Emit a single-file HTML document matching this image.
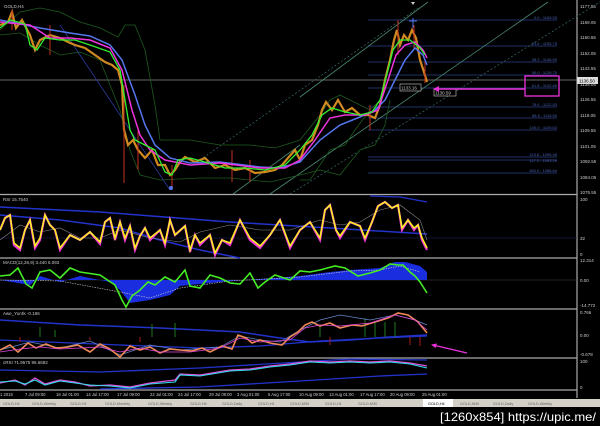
<!DOCTYPE html>
<html><head><meta charset="utf-8"><style>
html,body{margin:0;padding:0;background:#000;width:600px;height:426px;overflow:hidden}
svg{display:block}
text{font-family:"Liberation Sans",sans-serif}
</style></head><body>
<svg width="600" height="426" viewBox="0 0 600 426" xmlns="http://www.w3.org/2000/svg">
<rect width="600" height="426" fill="#000"/>
<line x1="577" y1="0" x2="577" y2="398" stroke="#ccc" stroke-width="1"/>
<g font-size="4.5" fill="#ccc">
<text x="580" y="8">1177.55</text><text x="580" y="24">1169.05</text><text x="580" y="39">1160.55</text>
<text x="580" y="55">1152.05</text><text x="580" y="70">1143.55</text><text x="580" y="86">1135.05</text>
<text x="580" y="101">1126.55</text><text x="580" y="117">1118.05</text><text x="580" y="132">1109.55</text>
<text x="580" y="148">1101.05</text><text x="580" y="163">1092.55</text><text x="580" y="179">1084.05</text>
<text x="580" y="194">1075.55</text>
<text x="580" y="201">100</text><text x="580" y="240">32</text><text x="580" y="256">0</text>
<text x="580" y="262">12.314</text><text x="580" y="282">0.00</text><text x="580" y="307">-14.772</text>
<text x="580" y="314">0.766</text><text x="580" y="337">0.00</text><text x="580" y="356">-0.678</text>
<text x="580" y="363">100</text><text x="580" y="389">0</text>
</g>
<rect x="577" y="77" width="21" height="7" fill="#ddd"/><text x="579" y="82.5" font-size="4.5" fill="#000">1136.50</text>
<text x="4" y="8" font-size="4.5" fill="#ccc">GOLD,H4</text>
<line x1="0" y1="80" x2="577" y2="80" stroke="#888" stroke-width="0.8"/>
<g stroke="#2a3f8a" stroke-width="0.8">
<line x1="368" y1="20" x2="557" y2="20"/><line x1="368" y1="46" x2="557" y2="46"/>
<line x1="368" y1="62" x2="557" y2="62"/><line x1="368" y1="75" x2="557" y2="75"/>
<line x1="368" y1="88" x2="557" y2="88"/><line x1="368" y1="107" x2="557" y2="107"/>
<line x1="368" y1="118" x2="557" y2="118"/><line x1="368" y1="130" x2="557" y2="130"/>
<line x1="368" y1="157" x2="557" y2="157"/><line x1="368" y1="160" x2="557" y2="160"/>
<line x1="368" y1="173" x2="557" y2="173"/>
</g>
<g font-size="4" fill="#4a60b0" text-anchor="end">
<text x="557" y="19">0.0 : 1169.93</text><text x="557" y="45">23.6 : 1155.75</text><text x="557" y="61">38.2 : 1146.99</text>
<text x="557" y="74">50.0 : 1139.75</text><text x="557" y="87">61.8 : 1132.66</text><text x="557" y="106">78.6 : 1122.53</text>
<text x="557" y="117">88.6 : 1116.55</text><text x="557" y="129">100.0 : 1109.63</text><text x="557" y="156">123.6 : 1095.46</text>
<text x="557" y="162">127.2 : 1093.29</text><text x="557" y="172">150.0 : 1086.64</text>
</g>
<g stroke="#4a8a70" stroke-width="0.8" fill="none">
<line x1="300" y1="97" x2="428" y2="2"/><line x1="270" y1="194" x2="548" y2="2"/>
<line x1="233" y1="194" x2="300" y2="145"/>
</g>
<g stroke="#3a6a70" stroke-width="0.7" fill="none" stroke-dasharray="2,2">
<line x1="200" y1="160" x2="418" y2="8"/><line x1="290" y1="194" x2="600" y2="2"/>
</g>
<line x1="60" y1="25" x2="170" y2="190" stroke="#2a3a9a" stroke-width="0.8"/>
<polyline fill="none" stroke="#1e5a1e" stroke-width="0.8" points="0,30 20,12 40,8 60,12 80,22 100,28 118,37 125,25 135,25 145,50 155,105 160,140 190,140 220,145 250,145 275,148 300,140 320,115 330,100 340,95 360,105 370,110"/>
<polyline fill="none" stroke="#1e5a1e" stroke-width="0.8" points="0,35 20,33 40,45 60,55 80,52 100,60 120,110 130,150 140,175 160,180 200,178 230,178 270,182 300,175 320,170 340,175 360,150 375,145 385,125 390,100"/>
<polyline fill="none" stroke="#1e5a1e" stroke-width="0.8" points="300,180 310,180 320,165 330,150 345,145 355,130 370,110 380,100 390,75"/>
<polyline fill="none" stroke="#d08a20" stroke-width="2.2" points="0,25 8,22 12,12 16,28 22,20 30,35 35,50 40,40 50,35 60,38 68,42 75,45 85,48 95,55 105,62 112,65 118,70 122,85 124,130 128,145 133,140 138,150 145,158 152,150 158,165 165,165 170,175 175,170 180,162 185,157 195,162 205,158 215,168 225,165 235,170 245,168 255,173 265,172 275,170 282,165 288,158 295,150 300,160 305,145 312,140 318,125 322,110 326,102 332,110 338,100 345,112 352,108 360,115 368,115 375,118 380,105 385,80 390,60 394,40 397,30 400,45 404,35 408,40 412,30 416,38 420,60 424,72 427,82"/>
<g stroke="#c23020" stroke-width="1">
<line x1="12" y1="10" x2="12" y2="30"/><line x1="50" y1="25" x2="50" y2="55"/><line x1="124" y1="85" x2="124" y2="183"/>
<line x1="138" y1="130" x2="138" y2="170"/><line x1="172" y1="165" x2="172" y2="188"/><line x1="232" y1="150" x2="232" y2="182"/>
<line x1="250" y1="160" x2="250" y2="182"/><line x1="370" y1="105" x2="370" y2="130"/><line x1="398" y1="20" x2="398" y2="55"/>
<line x1="414" y1="25" x2="414" y2="50"/><line x1="425" y1="60" x2="425" y2="83"/>
</g>
<polyline fill="none" stroke="#5577ee" stroke-width="1.5" points="0,20 40,28 70,33 90,36 110,45 122,60 135,95 145,125 155,145 170,158 190,163 220,162 260,167 280,168 300,162 320,140 340,125 360,117 375,110 385,100 395,80 405,60 415,48 423,55 427,65"/>
<polyline fill="none" stroke="#ee33dd" stroke-width="1.5" points="0,22 30,25 50,38 70,38 90,40 110,48 122,70 132,110 140,135 150,150 165,160 190,165 220,163 260,168 285,168 300,160 315,140 330,118 345,115 365,115 378,110 388,80 396,55 405,45 415,42 423,50 427,58"/>
<polyline fill="none" stroke="#33ee33" stroke-width="1.3" points="0,28 10,20 25,24 30,45 37,50 45,38 60,40 75,40 90,45 110,52 120,70 125,100 130,130 135,140 145,145 155,150 165,172 172,175 178,160 190,158 205,162 225,168 245,168 265,170 285,165 300,150 312,135 322,115 332,108 345,112 360,115 372,112 380,100 388,70 393,50 400,40 410,40 420,48 425,55"/>
<line x1="413" y1="18" x2="413" y2="28" stroke="#5577ee" stroke-width="1"/><line x1="409" y1="21" x2="417" y2="21" stroke="#5577ee" stroke-width="1"/>
<circle cx="171" cy="188" r="2" fill="#5577ee"/>
<path d="M411 2 l2 3 2 -3z" fill="#ccc"/>
<rect x="400" y="84" width="21" height="7" fill="#000" stroke="#ccc" stroke-width="0.6"/><text x="401" y="89.5" font-size="4.5" fill="#ccc">1133.16</text>
<rect x="434" y="89" width="22" height="7" fill="#000" stroke="#ccc" stroke-width="0.6"/><text x="435" y="94.5" font-size="4.5" fill="#ccc">1130.59</text>
<line x1="435" y1="89" x2="525" y2="89" stroke="#ee33dd" stroke-width="1.5"/>
<path d="M433 89 l6 -3 0 6z" fill="#ee33dd"/>
<rect x="525" y="76" width="34" height="20" fill="none" stroke="#ee33dd" stroke-width="1.3"/>
<g stroke="#aaa" stroke-width="1.2">
<line x1="0" y1="194.5" x2="577" y2="194.5"/><line x1="0" y1="258" x2="577" y2="258"/>
<line x1="0" y1="309" x2="577" y2="309"/><line x1="0" y1="358" x2="577" y2="358"/>
<line x1="0" y1="390" x2="577" y2="390"/>
</g>
<text x="3" y="201" font-size="4.5" fill="#ccc">RSI 15.7540</text>
<line x1="0" y1="238" x2="577" y2="238" stroke="#222a66" stroke-width="0.6"/>
<polyline fill="none" stroke="#2233cc" stroke-width="1.5" points="0,207 100,212 230,222 330,228 427,234"/>
<polyline fill="none" stroke="#2233cc" stroke-width="1.5" points="0,215 60,220 120,228 160,240 200,250 240,258"/>
<polyline fill="none" stroke="#2233cc" stroke-width="1.3" points="370,196 400,197 427,202"/>
<polyline fill="none" stroke="#888" stroke-width="0.6" points="0,240 20,225 40,232 60,228 80,238 100,238 120,230 150,238 180,242 200,232 230,225 260,230 290,230 320,220 340,225 360,222 380,210 400,205 420,220 427,240"/>
<polyline fill="none" stroke="#ee33dd" stroke-width="2.2" points="0,230 5,218 10,215 14,245 20,250 25,230 30,220 35,248 40,240 45,215 50,225 55,230 60,250 70,235 80,240 90,232 100,244 105,222 110,218 115,240 120,222 125,240 130,226 135,250 140,236 145,228 150,240 160,230 165,245 170,220 175,235 185,226 190,252 195,235 200,245 210,235 215,255 222,240 230,245 240,220 250,240 260,248 270,235 280,220 290,248 300,230 310,222 320,240 325,210 330,205 336,230 340,238 350,222 360,226 365,240 372,222 378,206 385,202 392,208 398,205 402,230 408,220 414,230 418,225 422,240 427,250"/>
<polyline fill="none" stroke="#ffee22" stroke-width="1.6" points="0,230 5,218 10,215 14,243 20,248 25,230 30,220 35,246 40,238 45,215 50,225 55,230 60,248 70,235 80,240 90,232 100,242 105,222 110,218 115,238 120,222 125,238 130,226 135,248 140,236 145,228 150,238 160,230 165,243 170,220 175,235 185,226 190,250 195,235 200,243 210,235 215,253 222,240 230,243 240,220 250,238 260,246 270,235 280,220 290,246 300,230 310,222 320,238 325,210 330,205 336,230 340,236 350,222 360,226 365,238 372,222 378,206 385,202 392,208 398,205 402,228 408,220 414,228 418,225 422,238 427,248"/>
<text x="3" y="264" font-size="4.5" fill="#ccc">MACD(12,26,9) 3.440 6.093</text>
<line x1="0" y1="280" x2="577" y2="280" stroke="#444" stroke-width="0.6"/>
<path d="M0 280 L30 285 L40 276 L60 282 L80 276 L110 282 L120 290 L130 303 L150 300 L170 295 L180 286 L200 284 L230 281 L260 279 L300 276 L330 272 L350 270 L380 268 L395 262 L405 262 L420 266 L427 272 L427 280 Z" fill="#1a2ee0"/>
<polyline fill="none" stroke="#ccc" stroke-width="0.6" stroke-dasharray="1.5,1" points="0,280 60,281 120,292 150,298 180,288 230,281 300,277 350,271 380,270 400,266 420,272"/>
<polyline fill="none" stroke="#44ee22" stroke-width="1.6" points="0,276 10,275 18,268 26,284 32,288 40,272 50,270 60,278 70,268 80,272 100,275 115,285 122,300 126,307 132,296 140,290 148,282 155,285 165,277 175,282 185,270 190,286 200,288 210,275 220,278 230,283 240,284 250,273 258,288 265,282 275,275 290,280 300,271 310,272 320,270 335,266 345,268 358,276 370,273 380,270 390,264 398,265 403,265 410,272 415,276 420,282 427,293"/>
<text x="3" y="315" font-size="4.5" fill="#ccc">Awe_Yur4k -0.186</text>
<polyline fill="none" stroke="#2233cc" stroke-width="1.5" points="0,320 80,325 160,328 240,332 280,338 310,342 350,340 390,337 427,335"/>
<polyline fill="none" stroke="#2233cc" stroke-width="1.3" points="0,340 120,345 200,348 260,346 320,341 380,338 427,336"/>
<g stroke="#1e7a1e" stroke-width="1"><line x1="40" y1="327" x2="40" y2="337"/><line x1="55" y1="330" x2="55" y2="337"/><line x1="152" y1="324" x2="152" y2="337"/><line x1="175" y1="323" x2="175" y2="337"/><line x1="320" y1="325" x2="320" y2="337"/><line x1="365" y1="318" x2="365" y2="337"/><line x1="375" y1="321" x2="375" y2="337"/><line x1="385" y1="322" x2="385" y2="337"/><line x1="395" y1="322" x2="395" y2="337"/></g>
<g stroke="#aa1818" stroke-width="1"><line x1="20" y1="337" x2="20" y2="342"/><line x1="90" y1="337" x2="90" y2="340"/><line x1="140" y1="337" x2="140" y2="342"/><line x1="330" y1="337" x2="330" y2="345"/><line x1="410" y1="337" x2="410" y2="345"/><line x1="420" y1="337" x2="420" y2="346"/></g>
<polyline fill="none" stroke="#6688cc" stroke-width="0.7" points="0,350 30,342 60,348 90,341 120,355 150,345 180,350 220,347 240,336 260,340 280,342 300,330 320,320 340,315 370,320 395,315 415,320 427,325"/>
<polyline fill="none" stroke="#ee8855" stroke-width="1.6" points="0,350 10,345 18,352 28,343 36,348 46,344 56,348 68,347 78,345 90,352 100,344 110,349 120,357 130,346 140,350 150,347 160,353 170,349 180,350 192,351 202,348 210,352 222,346 232,349 238,335 246,338 252,343 260,340 270,343 282,345 290,337 298,332 305,325 312,322 320,326 330,323 340,328 352,325 362,326 375,322 388,318 398,313 408,315 418,322 427,333"/>
<polyline fill="none" stroke="#dd44dd" stroke-width="0.8" points="0,352 20,349 40,347 60,349 80,348 100,347 120,352 140,348 160,352 190,352 220,348 240,338 260,342 290,340 305,328 320,325 340,326 370,323 395,315 415,320 427,330"/>
<line x1="433" y1="345" x2="467" y2="353" stroke="#ee33dd" stroke-width="1.2"/>
<path d="M431 344.5 l6 -1 -1.5 4.5z" fill="#ee33dd"/>
<text x="3" y="364" font-size="4.5" fill="#ccc">cRSI 71.9575 95.6682</text>
<polyline fill="none" stroke="#2233cc" stroke-width="1.3" points="0,370 100,372 200,368 300,362 350,359 427,360"/>
<polyline fill="none" stroke="#2233cc" stroke-width="1.3" points="100,389 200,387 300,381 380,376 427,374"/>
<polyline fill="none" stroke="#dd55dd" stroke-width="1.3" points="0,383 15,380 25,385 35,378 45,384 60,380 75,382 90,386 110,385 130,387 150,383 175,380 180,374 200,375 230,370 250,369 270,366 290,364 310,361 330,362 350,361 370,362 390,361 410,363 427,366"/>
<polyline fill="none" stroke="#33ddee" stroke-width="1.1" points="0,382 15,381 25,384 35,380 45,385 60,381 75,383 90,385 110,386 130,388 150,384 175,382 180,375 200,376 230,371 250,370 270,367 290,365 310,362 330,363 350,362 370,363 390,362 410,364 427,368"/>
<g font-size="4.2" fill="#ccc">
<text x="0" y="396">1 2015</text><text x="25" y="396">7 Jul 09:00</text><text x="56" y="396">16 Jul 01:00</text>
<text x="86" y="396">14 Jul 17:00</text><text x="117" y="396">17 Jul 09:00</text><text x="150" y="396">22 Jul 01:00</text>
<text x="178" y="396">24 Jul 17:00</text><text x="209" y="396">29 Jul 09:00</text><text x="237" y="396">3 Aug 01:00</text>
<text x="268" y="396">5 Aug 17:00</text><text x="299" y="396">10 Aug 09:00</text><text x="329" y="396">13 Aug 01:00</text>
<text x="360" y="396">17 Aug 17:00</text><text x="390" y="396">20 Aug 09:00</text><text x="422" y="396">25 Aug 01:00</text>
</g>
<rect x="0" y="399" width="600" height="8" fill="#d4d0c8"/>
<g font-size="3.8" fill="#666">
<text x="3" y="405">GOLD,H4</text><text x="32" y="405">GOLD,Weekly</text><text x="70" y="405">GOLD,H1</text>
<text x="105" y="405">GOLD,Monthly</text><text x="148" y="405">GOLD,Weekly</text><text x="190" y="405">GOLD,H4</text>
<text x="222" y="405">GOLD,Daily</text><text x="258" y="405">GOLD,H1</text><text x="290" y="405">GOLD,M30</text>
<text x="325" y="405">GOLD,H1</text><text x="358" y="405">GOLD,M30</text><text x="460" y="405">GOLD,M30</text>
<text x="493" y="405">GOLD,Daily</text><text x="528" y="405">GOLD,Weekly</text>
</g>
<rect x="423" y="399" width="30" height="8" fill="#fff"/><text x="428" y="405" font-size="3.8" fill="#000">GOLD,H4</text>
<text x="596" y="421" font-size="12" fill="#fff" text-anchor="end" textLength="156" lengthAdjust="spacingAndGlyphs" font-family="Liberation Sans Narrow, Liberation Sans, sans-serif">[1260x854] https://upic.me/</text>
</svg>
</body></html>
